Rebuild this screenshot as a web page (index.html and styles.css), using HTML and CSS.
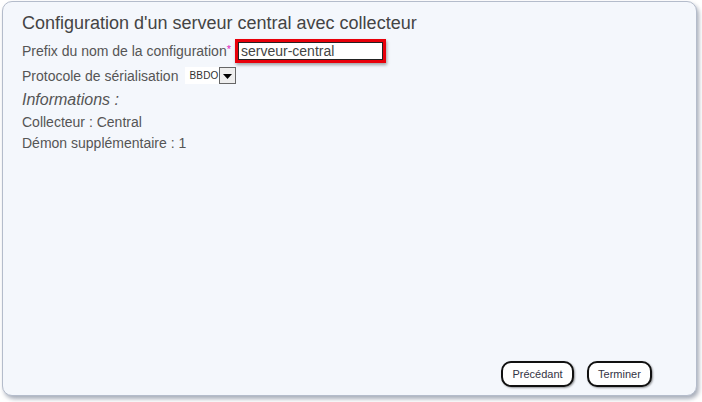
FILE: index.html
```html
<!DOCTYPE html>
<html lang="fr">
<head>
<meta charset="utf-8">
<link rel="stylesheet" href="styles.css">
</head>
<body>
<div class="panel">
  <h1 class="title">Configuration d'un serveur central avec collecteur</h1>
  <div class="row">
    <span class="label">Prefix du nom de la configuration<span class="req">*</span></span>
    <span class="input-wrap"><span class="input">serveur-central</span></span>
  </div>
  <div class="row row2">
    <span class="label">Protocole de sérialisation</span>
    <span class="select"><span class="select-val">BBDO</span><span class="select-btn"><svg width="9" height="5" viewBox="0 0 9 5"><path d="M0 0h9L4.5 5z" fill="#000"/></svg></span></span>
  </div>
  <div class="info-title">Informations :</div>
  <div class="info">Collecteur : Central</div>
  <div class="info">Démon supplémentaire : 1</div>
  <div class="spacer"></div>
  <div class="actions">
    <span class="btn btn-prev">Précédant</span>
    <span class="btn btn-next">Terminer</span>
  </div>
</div>
</body>
</html>
```

FILE: styles.css
```css
html, body {
  margin: 0;
  padding: 0;
  background: #ffffff;
}
body {
  width: 702px;
  height: 402px;
  font-family: "Liberation Sans", Arial, sans-serif;
  color: #444;
}
.panel {
  box-sizing: border-box;
  margin: 1px 0 0 2px;
  width: 695px;
  height: 395px;
  background: #f4f7fc;
  border: 1px solid #b4bccb;
  border-radius: 10px;
  box-shadow: 2px 3px 4px rgba(110,120,140,0.6);
  padding: 11px 0 0 19px;
  display: flex;
  flex-direction: column;
}
.title {
  margin: 0;
  font-size: 18px;
  font-weight: normal;
  color: #444;
  line-height: 20px;
}
.row {
  display: flex;
  align-items: center;
  font-size: 14px;
  margin-top: 6px;
  height: 24px;
}
.label { color: #555; }
.req { color: #e020c0; font-size: 11px; position: relative; top: -3px; }
.input-wrap {
  margin-left: 4px;
  border: 3px solid #e8000a;
  box-shadow: 1px 2px 3px rgba(0,0,0,0.35);
  display: flex;
}
.input {
  box-sizing: border-box;
  width: 145px;
  height: 18px;
  border: 1px solid #222;
  background: #fff;
  padding-left: 2px;
  font-size: 14px;
  line-height: 16px;
  color: #444;
}
.row2 {
  margin-top: 0;
  height: 25px;
}
.select {
  margin-left: 7px;
  display: flex;
  align-items: center;
  background: #fff;
  height: 17px;
  padding-left: 4px;
}
.select-val {
  font-size: 10px;
  color: #333;
  letter-spacing: 0.2px;
}
.select-btn {
  box-sizing: border-box;
  width: 17px;
  height: 17px;
  border: 1px solid #666;
  background: #eee;
  display: flex;
  align-items: center;
  justify-content: center;
  margin-left: 0;
}
.select-btn svg { margin-top: 2px; }
.info-title {
  font-style: italic;
  font-size: 16px;
  color: #555;
  margin-top: 2px;
  line-height: 20px;
}
.info {
  font-size: 14px;
  color: #555;
  margin-top: 4px;
  line-height: 17px;
}
.spacer { flex: 1; }
.actions {
  display: flex;
  justify-content: flex-end;
  gap: 13px;
  padding-right: 44px;
  margin-bottom: 8px;
}
.btn {
  box-sizing: border-box;
  height: 26px;
  border: 2px solid #111;
  border-radius: 10px;
  background: #fff;
  box-shadow: 1px 1px 2px rgba(0,0,0,0.4);
  font-size: 11px;
  color: #334;
  display: flex;
  align-items: center;
  justify-content: center;
}
.btn-prev { width: 73px; }
.btn-next { width: 65px; }
```
